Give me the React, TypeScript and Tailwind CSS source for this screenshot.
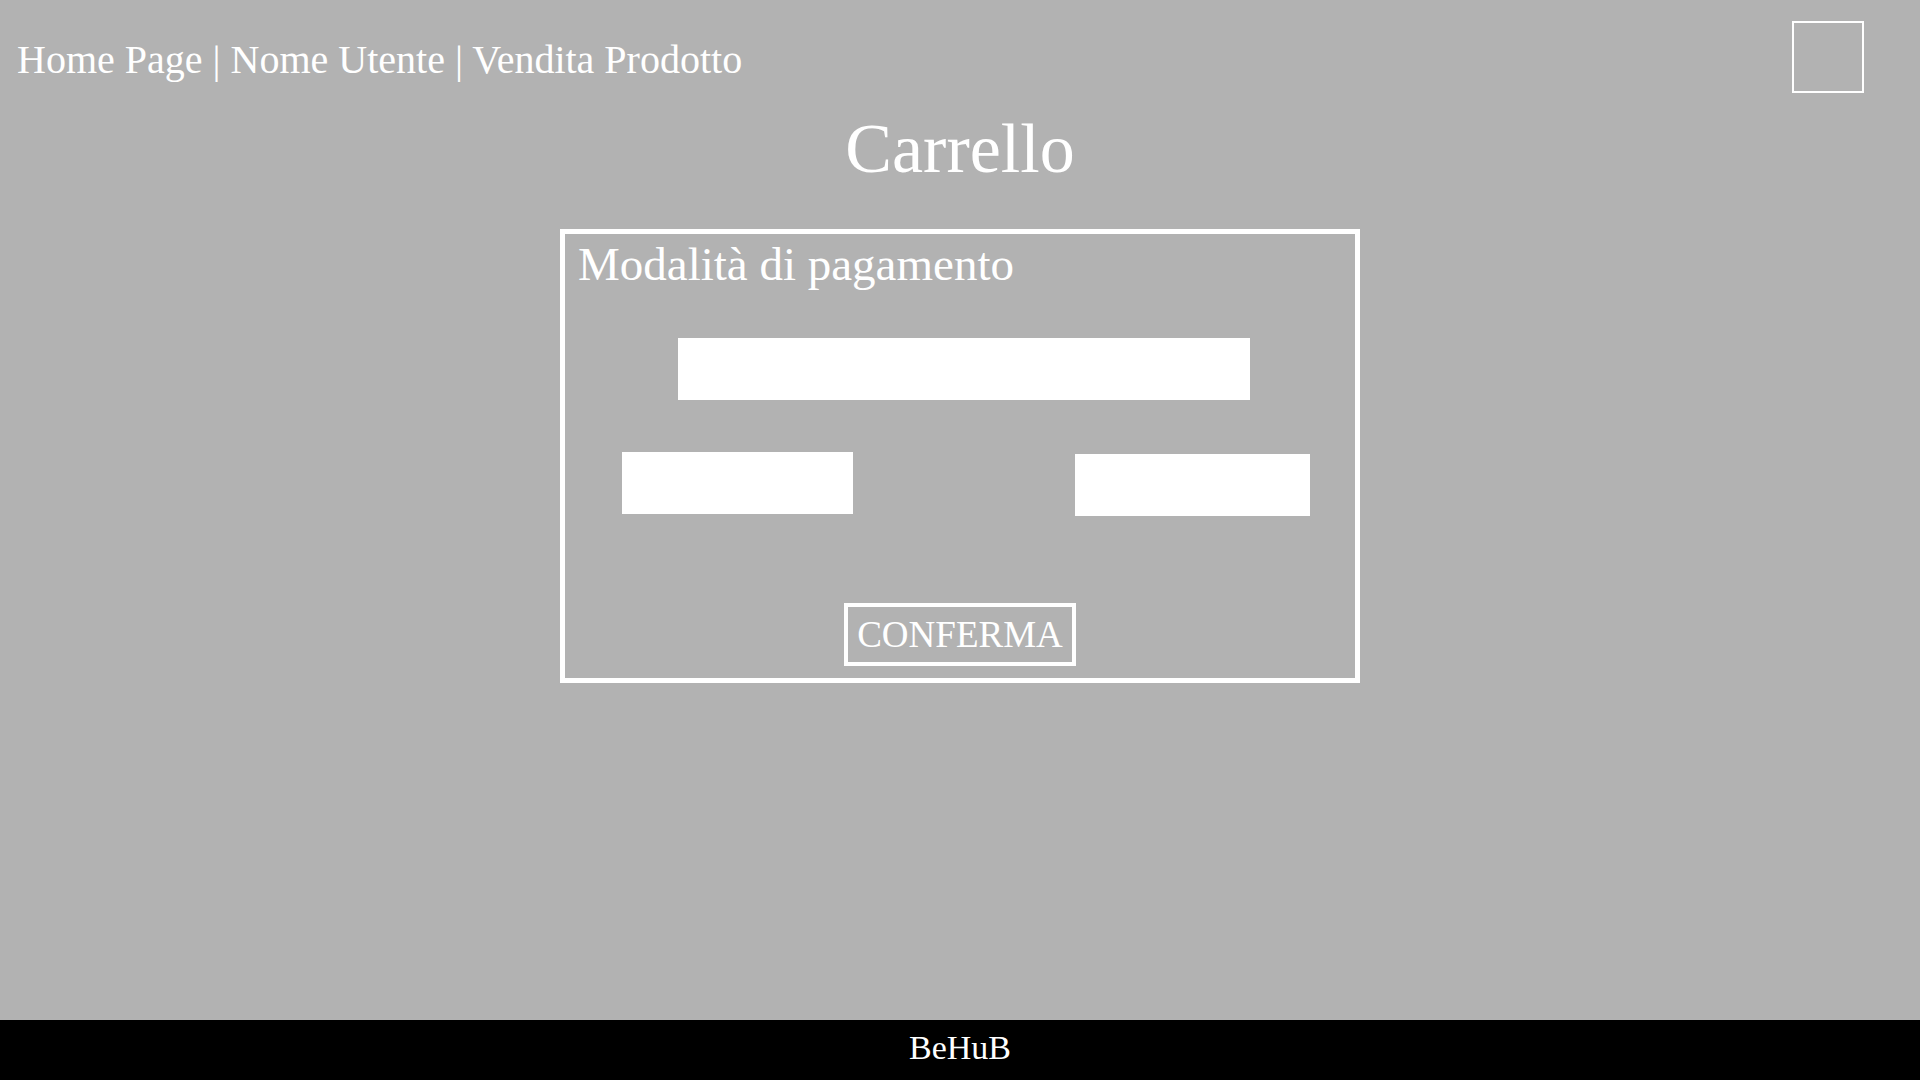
import React from "react";

export default function App() {
  return (
    <div className="min-h-screen flex flex-col bg-[#b2b2b2] text-white font-['Liberation_Serif',serif]">
      <header className="flex items-start justify-between">
        <div className="pt-[37px] pl-[17px] text-[40px] leading-[46px] whitespace-nowrap">
          Home Page | Nome Utente | Vendita Prodotto
        </div>
        <div className="mt-[21px] mr-[56px] w-[72px] h-[72px] border-2 border-white" />
      </header>

      <h1 className="mt-[16px] mb-[-1px] text-center text-[70px] leading-[80px] font-normal">Carrello</h1>

      <section className="mt-[41px] mx-auto w-[800px] border-[5px] border-white flex flex-col">
        <h2 className="pt-[3px] pl-[13px] text-[47px] leading-[54px] font-normal whitespace-nowrap">
          Modalità di pagamento
        </h2>
        <div className="mt-[47px] ml-[113px] w-[572px] h-[62px] bg-white" />
        <div className="mt-[52px] flex items-start">
          <div className="ml-[57px] w-[231px] h-[62px] bg-white" />
          <div className="ml-[222px] mt-[2px] w-[235px] h-[62px] bg-white" />
        </div>
        <div className="mt-[87px] pb-[12px] flex justify-center">
          <button className="w-[232px] h-[63px] border-4 border-white text-[37px] leading-[55px] text-white text-center">
            CONFERMA
          </button>
        </div>
      </section>

      <footer className="mt-auto h-[60px] bg-black text-center text-[34px] leading-[40px] pt-[8px]">
        BeHuB
      </footer>
    </div>
  );
}
